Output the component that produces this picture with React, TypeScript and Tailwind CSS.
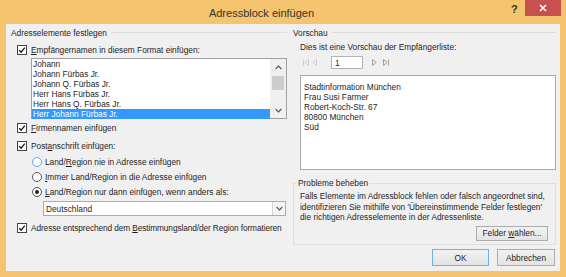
import React from 'react';

const items = [
  'Johann',
  'Johann Fürbas Jr.',
  'Johann Q. Fürbas Jr.',
  'Herr Hans Fürbas Jr.',
  'Herr Hans Q. Fürbas Jr.',
  'Herr Johann Fürbas Jr.',
];

const preview = ['Stadtinformation München', 'Frau Susi Farmer', 'Robert-Koch-Str. 67', '80800 München', 'Süd'];

const CheckBox: React.FC<{ checked?: boolean }> = ({ checked }) => (
  <span className="w-[10px] h-[10px] border border-[#444] bg-white flex items-center justify-center shrink-0">
    {checked && (
      <svg width="8" height="8" viewBox="0 0 8 8">
        <path d="M1.2 4.2 L3.1 6.1 L6.8 1.6" fill="none" stroke="#222" strokeWidth="1.4" />
      </svg>
    )}
  </span>
);

const Radio: React.FC<{ checked?: boolean; focus?: boolean }> = ({ checked, focus }) => (
  <span
    className={`w-[10px] h-[10px] rounded-full border bg-white flex items-center justify-center shrink-0 ${
      focus ? 'border-[#5aa7f0]' : 'border-[#555]'
    }`}
  >
    {checked && <span className="w-[4px] h-[4px] rounded-full bg-[#222]" />}
  </span>
);

const Chevron: React.FC<{ up?: boolean }> = ({ up }) => (
  <svg width="7" height="5" viewBox="0 0 7 5">
    <path d={up ? 'M0.6 4 L3.5 1 L6.4 4' : 'M0.6 1 L3.5 4 L6.4 1'} fill="none" stroke="#555" strokeWidth="1.1" />
  </svg>
);

const Button: React.FC<{ children: React.ReactNode; primary?: boolean; className?: string }> = ({
  children,
  primary,
  className,
}) => (
  <div
    className={`flex items-center justify-center border bg-gradient-to-b from-[#f2f2f2] to-[#e3e3e3] ${
      primary ? 'border-[#6cb0f0]' : 'border-[#adadad]'
    } ${className}`}
  >
    {children}
  </div>
);

const App: React.FC = () => {
  return (
    <div className="w-[566px] h-[277px] bg-[#f5c46f] flex flex-col font-['Liberation_Sans',Arial,sans-serif] text-[8.3px] leading-[10px] text-[#1e1e1e] whitespace-nowrap">
      {/* Title bar */}
      <div className="h-[24px] flex shrink-0">
        <div className="flex-1 pl-[12px] pt-[7px] text-center text-[11px] leading-[12px] text-[#333]">
          Adressblock einfügen
        </div>
        <div className="w-[14px] pt-[3px] text-[11px] leading-[12px] font-bold text-[#333]">?</div>
        <div className="w-[36px] h-[16px] mr-[5px] bg-[#c75050] flex items-center justify-center">
          <svg width="8" height="8" viewBox="0 0 8 8">
            <path d="M1 1 L7 7 M7 1 L1 7" stroke="#fff" strokeWidth="1.6" />
          </svg>
        </div>
      </div>

      {/* Client area */}
      <div className="mx-[6px] h-[247px] bg-[#f0f0f0] flex">
        {/* Left column */}
        <div className="w-[284px] shrink-0 pl-[5px] pr-[3px] flex flex-col">
          <div className="h-[18px] flex items-center">
            <span>Adresselemente festlegen</span>
            <div className="flex-1 ml-[4px] h-[2px] border-t border-[#dcdcdc] border-b-white" />
          </div>
          <div className="mt-[3px] h-[10px] ml-[6px] flex items-center gap-[4px]">
            <CheckBox checked />
            <span>
              <u className="underline-offset-[1px]">E</u>mpfängernamen in diesem Format einfügen:
            </span>
          </div>
          <div className="mt-[3px] ml-[20px] w-[256px] h-[61px] border border-[#a0a0a0] bg-white flex">
            <div className="flex-1 flex flex-col">
              {items.map((it, i) => (
                <div key={it} className={`h-[10px] pl-[1px] ${i === 5 ? 'bg-[#3399ff] text-white' : ''}`}>
                  {it}
                </div>
              ))}
            </div>
            <div className="w-[16px] bg-[#f0f0f0] flex flex-col items-center">
              <div className="h-[17px] flex items-center justify-center">
                <Chevron up />
              </div>
              <div className="w-[12px] h-[14px] bg-[#cdcdcd]" />
              <div className="flex-1" />
              <div className="h-[16px] flex items-center justify-center">
                <Chevron />
              </div>
            </div>
          </div>
          <div className="mt-[4px] h-[10px] ml-[6px] flex items-center gap-[4px]">
            <CheckBox checked />
            <span>
              <u className="underline-offset-[1px]">F</u>irmennamen einfügen
            </span>
          </div>
          <div className="mt-[8px] h-[10px] ml-[6px] flex items-center gap-[4px]">
            <CheckBox checked />
            <span>
              Post<u className="underline-offset-[1px]">a</u>nschrift einfügen:
            </span>
          </div>
          <div className="mt-[6px] h-[10px] ml-[21px] flex items-center gap-[3px]">
            <Radio focus />
            <span>
              Land/<u className="underline-offset-[1px]">R</u>egion nie in Adresse einfügen
            </span>
          </div>
          <div className="mt-[5px] h-[10px] ml-[21px] flex items-center gap-[3px]">
            <Radio />
            <span>
              <u className="underline-offset-[1px]">I</u>mmer Land/Region in die Adresse einfügen
            </span>
          </div>
          <div className="mt-[5px] h-[10px] ml-[21px] flex items-center gap-[3px]">
            <Radio checked />
            <span>
              <u className="underline-offset-[1px]">L</u>and/Region nur dann einfügen, wenn anders als:
            </span>
          </div>
          <div className="mt-[4px] ml-[32px] w-[243px] h-[15px] border border-[#acacac] bg-white flex">
            <div className="flex-1 pl-[2px] flex items-center">Deutschland</div>
            <div className="w-[13px] border-l border-[#d6d6d6] bg-[#f4f4f4] flex items-center justify-center">
              <Chevron />
            </div>
          </div>
          <div className="mt-[7px] h-[10px] ml-[6px] flex items-center gap-[4px]">
            <CheckBox checked />
            <span className="tracking-[-0.1px]">
              Adresse entsprechend dem <u className="underline-offset-[1px]">B</u>estimmungsland/der Region formatieren
            </span>
          </div>
        </div>

        {/* Right column */}
        <div className="w-[270px] shrink-0 pl-[3px] pr-[4px] flex flex-col">
          <div className="h-[18px] flex items-center">
            <span>Vorschau</span>
            <div className="flex-1 ml-[4px] h-[2px] border-t border-[#dcdcdc] border-b-white" />
          </div>
          <div className="h-[10px] pl-[7px]">Dies ist eine Vorschau der Empfängerliste:</div>
          <div className="mt-[4px] h-[13px] pl-[10px] flex items-center">
            <svg width="6" height="7" viewBox="0 0 6 7">
              <path d="M0.5 0.5 V6.5 M5.5 0.5 L1.8 3.5 L5.5 6.5 Z" fill="none" stroke="#c8c8c8" strokeWidth="0.9" />
            </svg>
            <svg width="5" height="7" viewBox="0 0 5 7" className="ml-[3px]">
              <path d="M4.5 0.5 L0.8 3.5 L4.5 6.5 Z" fill="none" stroke="#c8c8c8" strokeWidth="0.9" />
            </svg>
            <div className="ml-[14px] w-[32px] h-[13px] border border-[#b4b4b4] bg-white pl-[3px] flex items-center">1</div>
            <svg width="5" height="7" viewBox="0 0 5 7" className="ml-[9px]">
              <path d="M0.5 0.5 L4.2 3.5 L0.5 6.5 Z" fill="none" stroke="#999" strokeWidth="0.9" />
            </svg>
            <svg width="6" height="7" viewBox="0 0 6 7" className="ml-[6px]">
              <path d="M0.5 0.5 L4.2 3.5 L0.5 6.5 Z M5.5 0.5 V6.5" fill="none" stroke="#999" strokeWidth="0.9" />
            </svg>
          </div>
          <div className="mt-[6px] ml-[7px] w-[256px] h-[95px] border border-[#a8a8a8] bg-white pl-[3px] pt-[6px] flex flex-col">
            {preview.map(p => (
              <div key={p} className="h-[10px]">
                {p}
              </div>
            ))}
          </div>
          <fieldset className="mt-[8px] h-[67px] border border-[#dedede] pl-[6px] pr-[7px]">
            <legend className="ml-[-3px] px-[1px] leading-[10px]">Probleme beheben</legend>
            <div className="mt-[3px] leading-[10.5px]">
              <div>Falls Elemente im Adressblock fehlen oder falsch angeordnet sind,</div>
              <div>identifizieren Sie mithilfe von 'Übereinstimmende Felder festlegen'</div>
              <div>die richtigen Adresselemente in der Adressenliste.</div>
            </div>
            <div className="mt-[3px] flex justify-end">
              <Button className="w-[72px] h-[15px]">
                <span>
                  Felder <u className="underline-offset-[1px]">w</u>ählen...
                </span>
              </Button>
            </div>
          </fieldset>
          <div className="mt-[4px] flex justify-end gap-[8px] pr-[1px]">
            <Button primary className="w-[57px] h-[17px]">
              OK
            </Button>
            <Button className="w-[58px] h-[17px]">Abbrechen</Button>
          </div>
        </div>
      </div>
    </div>
  );
};

export default App;
